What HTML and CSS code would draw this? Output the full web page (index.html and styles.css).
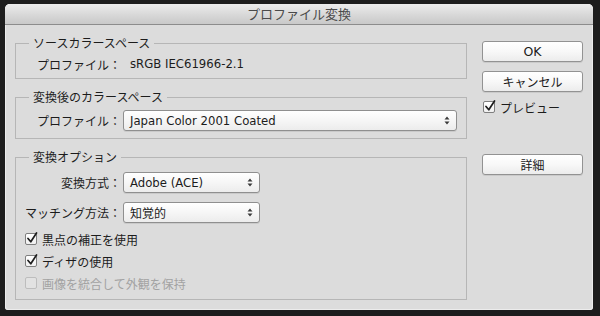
FILE: index.html
```html
<!DOCTYPE html>
<html lang="ja">
<head>
<meta charset="utf-8">
<title>プロファイル変換</title>
<link rel="stylesheet" href="styles.css">
</head>
<body>
<div class="dialog">
  <div class="titlebar">プロファイル変換</div>
  <div class="content">
    <div class="groups">
      <fieldset class="group g1">
        <legend>ソースカラースペース</legend>
        <div class="row">
          <span class="label">プロファイル：</span>
          <span class="value latin">sRGB IEC61966-2.1</span>
        </div>
      </fieldset>
      <fieldset class="group g2">
        <legend>変換後のカラースペース</legend>
        <div class="row">
          <span class="label">プロファイル：</span>
          <div class="select wide">
            <span class="latin">Japan Color 2001 Coated</span>
            <svg class="arrows" width="6" height="9" viewBox="0 0 6 9"><path d="M0.5 3.5 L3 0.5 L5.5 3.5 Z M0.5 5.5 L3 8.5 L5.5 5.5 Z" fill="#3a3a3a"/></svg>
          </div>
        </div>
      </fieldset>
      <fieldset class="group g3">
        <legend>変換オプション</legend>
        <div class="row">
          <span class="label">変換方式：</span>
          <div class="select short">
            <span class="latin">Adobe (ACE)</span>
            <svg class="arrows" width="6" height="9" viewBox="0 0 6 9"><path d="M0.5 3.5 L3 0.5 L5.5 3.5 Z M0.5 5.5 L3 8.5 L5.5 5.5 Z" fill="#3a3a3a"/></svg>
          </div>
        </div>
        <div class="row second">
          <span class="label">マッチング方法：</span>
          <div class="select short">
            <span>知覚的</span>
            <svg class="arrows" width="6" height="9" viewBox="0 0 6 9"><path d="M0.5 3.5 L3 0.5 L5.5 3.5 Z M0.5 5.5 L3 8.5 L5.5 5.5 Z" fill="#3a3a3a"/></svg>
          </div>
        </div>
        <div class="checks">
          <div class="check">
            <span class="box"><svg width="14" height="14" viewBox="0 0 14 14"><path d="M3 6.5 L5.8 9.8 L11.5 1" fill="none" stroke="#1e1e1e" stroke-width="1.7" stroke-linecap="round" stroke-linejoin="round"/></svg></span>
            <span>黒点の補正を使用</span>
          </div>
          <div class="check">
            <span class="box"><svg width="14" height="14" viewBox="0 0 14 14"><path d="M3 6.5 L5.8 9.8 L11.5 1" fill="none" stroke="#1e1e1e" stroke-width="1.7" stroke-linecap="round" stroke-linejoin="round"/></svg></span>
            <span>ディザの使用</span>
          </div>
          <div class="check disabled">
            <span class="box"></span>
            <span>画像を統合して外観を保持</span>
          </div>
        </div>
      </fieldset>
    </div>
    <div class="side">
      <div class="btn ok latin">OK</div>
      <div class="btn cancel">キャンセル</div>
      <div class="check preview">
        <span class="box"><svg width="14" height="14" viewBox="0 0 14 14"><path d="M3 6.5 L5.8 9.8 L11.5 1" fill="none" stroke="#1e1e1e" stroke-width="1.7" stroke-linecap="round" stroke-linejoin="round"/></svg></span>
        <span>プレビュー</span>
      </div>
      <div class="btn detail">詳細</div>
    </div>
  </div>
</div>
</body>
</html>
```

FILE: styles.css
```css
html, body {
  margin: 0;
  padding: 0;
}
body {
  background: #1d1d1d;
  width: 600px;
  height: 316px;
  overflow: hidden;
  font-family: "Noto Sans CJK JP", sans-serif;
  font-size: 12px;
  color: #1c1c1c;
}
.latin {
  font-family: "DejaVu Sans", "Noto Sans CJK JP", sans-serif;
  font-size: 11.7px;
}
.dialog {
  margin: 4px 0 0 5px;
  width: 588px;
  height: 306px;
  background: #dcdcdc;
  border-radius: 5px 5px 3px 3px;
  overflow: hidden;
  box-shadow: inset 0 0 0 1px #ececec;
  box-sizing: border-box;
}
.titlebar {
  height: 20px;
  line-height: 20px;
  border-bottom: 1px solid #8c8c8c;
  background: linear-gradient(#ececec, #d6d6d6 60%, #c9c9c9);
  text-align: center;
  font-size: 13px;
  color: #4a4a4a;
}
.content {
  display: flex;
  padding: 10px 10px 0 10px;
  gap: 15px;
}
.groups {
  width: 452px;
  display: flex;
  flex-direction: column;
  gap: 10px;
}
.group {
  margin: 0;
  min-width: 0;
  border: 1px solid #b6b6b6;
  padding: 0 9px;
}
.group legend {
  margin-left: 4px;
  padding: 0 4px;
  line-height: 16px;
  height: 16px;
  color: #1c1c1c;
}
.g1 { padding-top: 3px; padding-bottom: 4px; }
.g2 { padding-top: 5px; padding-bottom: 7px; }
.g3 { padding-top: 7px; padding-bottom: 5px; }
.row {
  display: flex;
  align-items: center;
  height: 20px;
}
.g2 .row, .g3 .row {
  height: 21px;
}
.row.second {
  margin-top: 9px;
}
.label {
  width: 96px;
  text-align: right;
  white-space: nowrap;
  flex: none;
}
.value {
  margin-left: 9px;
}
.select {
  margin-left: 2px;
  height: 21px;
  box-sizing: border-box;
  border: 1px solid #8f8f8f;
  border-radius: 3px;
  background: linear-gradient(#ffffff, #f6f6f6 50%, #ececec);
  box-shadow: 0 1px 0 rgba(0,0,0,0.08);
  display: flex;
  align-items: center;
  justify-content: space-between;
  padding: 0 6px 0 6px;
}
.select.wide { width: 334px; }
.select.short { width: 137px; }
.arrows { flex: none; }
.checks {
  margin-top: 5px;
  display: flex;
  flex-direction: column;
}
.check {
  height: 22px;
  display: flex;
  align-items: center;
  gap: 5px;
}
.box {
  width: 12px;
  height: 12px;
  box-sizing: border-box;
  border: 1px solid #7f7f7f;
  border-radius: 2px;
  background: linear-gradient(#ffffff, #f0f0f0);
  position: relative;
  flex: none;
}
.box svg {
  position: absolute;
  left: -1px;
  top: -2px;
}
.check.disabled {
  color: #a2a2a2;
}
.check.disabled .box {
  border-color: #bdbdbd;
  background: #e2e2e2;
}
.side {
  width: 101px;
  margin-top: 6px;
  display: flex;
  flex-direction: column;
}
.btn {
  height: 21px;
  box-sizing: border-box;
  border: 1px solid #929292;
  border-radius: 3px;
  background: linear-gradient(#ffffff, #f8f8f8 50%, #ececec);
  box-shadow: 0 1px 0 rgba(0,0,0,0.08);
  display: flex;
  align-items: center;
  justify-content: center;
  color: #1a1a1a;
}
.btn.ok {
  font-size: 12.5px;
}
.btn.cancel {
  margin-top: 9px;
}
.check.preview {
  margin-top: 6px;
  height: 18px;
  padding-left: 1px;
}
.btn.detail {
  margin-top: 38px;
}
```
